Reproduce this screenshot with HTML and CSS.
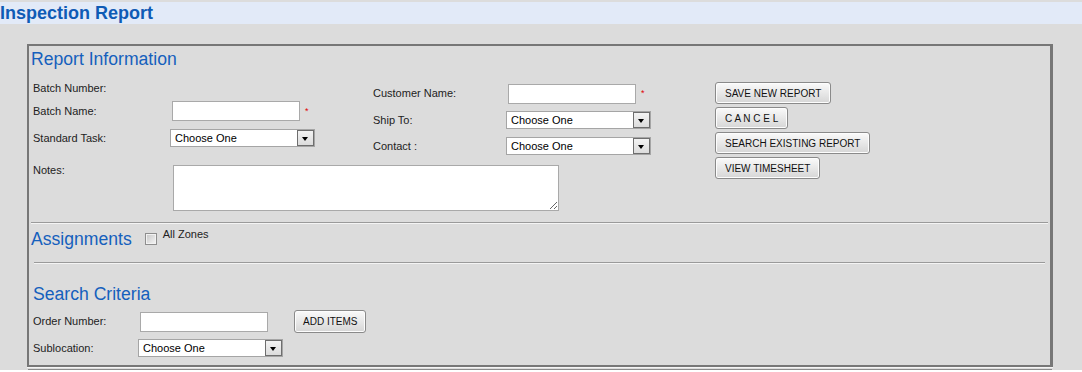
FILE: index.html
```html
<!DOCTYPE html>
<html lang="en">
<head>
  <meta charset="UTF-8" />
  <title>Inspection Report</title>
  <link rel="stylesheet" href="styles.css">
</head>
<body>
  <div class="page-head">Inspection Report</div>

  <div class="panel">
    <h2 class="section-title">Report Information</h2>

    <div class="report-info">
      <div class="info-fields">
        <div class="info-cols">
          <div class="col col-left">
            <div class="field f-number"><label>Batch Number:</label></div>
            <div class="field"><label>Batch Name:</label><input type="text" class="text"><span class="req">*</span></div>
            <div class="field f-task">
              <label>Standard Task:</label>
              <span class="dropdown"><select><option>Choose One</option></select><span class="drop-btn"></span></span>
            </div>
          </div>

          <div class="col col-mid">
            <div class="field"><label>Customer Name:</label><input type="text" class="text"><span class="req">*</span></div>
            <div class="field">
              <label>Ship To:</label>
              <span class="dropdown"><select><option>Choose One</option></select><span class="drop-btn"></span></span>
            </div>
            <div class="field">
              <label>Contact :</label>
              <span class="dropdown"><select><option>Choose One</option></select><span class="drop-btn"></span></span>
            </div>
          </div>
        </div>

        <div class="field notes-row">
          <label>Notes:</label>
          <textarea></textarea>
        </div>
      </div>

      <div class="actions">
        <button>SAVE NEW REPORT</button>
        <button>C A N C E L</button>
        <button>SEARCH EXISTING REPORT</button>
        <button>VIEW TIMESHEET</button>
      </div>
    </div>

    <hr class="rule rule-wide">

    <div class="assign-row">
      <h2 class="section-title">Assignments</h2>
      <input type="checkbox" id="allZones" class="check">
      <label for="allZones" class="check-label">All Zones</label>
    </div>

    <hr class="rule rule-narrow">

    <h2 class="section-title search-title">Search Criteria</h2>

    <div class="search">
      <div class="field f-order">
        <label>Order Number:</label>
        <input type="text" class="text">
        <button class="add-btn">ADD ITEMS</button>
      </div>
      <div class="field f-subloc">
        <label>Sublocation:</label>
        <span class="dropdown"><select><option>Choose One</option></select><span class="drop-btn"></span></span>
      </div>
    </div>
  </div>

  <div class="panel-next"></div>
</body>
</html>
```

FILE: styles.css
```css
html {
  background: #fff;
}

body {
  margin: 0;
  padding-top: 2px;
  background: #dcdcdc;
  font-family: "Liberation Sans", Arial, Helvetica, sans-serif;
  font-size: 11px;
  color: #222;
}

.page-head {
  height: 22px;
  line-height: 22px;
  background: #e2eaf8;
  color: #0f5bb5;
  font-size: 18px;
  font-weight: bold;
}

.panel {
  margin: 20px 29px 0 27px;
  border: 2px solid #777;
  border-right-width: 3px;
  padding-bottom: 7px;
  box-shadow: 0 1px 0 #f4f4f4;
}

.panel-next {
  margin: 2px 30px 0 28px;
  border-top: 1px solid #8a8a8a;
}

.section-title {
  margin: 0;
  padding: 2px 0 0 2px;
  font-size: 17.6px;
  font-weight: normal;
  line-height: 22px;
  color: #1560bd;
}

/* report information block */
.report-info {
  display: flex;
  margin-top: 6px;
  padding-left: 4px;
}

.info-cols {
  display: flex;
}

.col {
  display: flex;
  flex-direction: column;
}

.col-left {
  width: 340px;
}

.col-left label {
  width: 137px;
}

.col-mid {
  width: 342px;
  padding-top: 6px;
  gap: 4px;
}

.col-mid label {
  width: 133px;
}

.col-mid .field:first-child {
  height: 23px;
}

.field {
  display: flex;
  align-items: center;
  height: 22px;
}

.field label {
  flex: none;
  line-height: 13px;
}

.f-number {
  height: 24px;
}

.f-task {
  margin-top: 5px;
}

.notes-row {
  height: auto;
  align-items: flex-start;
  margin-top: 8px;
}

.notes-row label {
  width: 137px;
  margin-top: -1px;
}

input.text {
  box-sizing: border-box;
  width: 128px;
  height: 20px;
  margin: 0 0 0 2px;
  padding: 0 3px;
  border: 1px solid #a9a9a9;
  background: #fff;
  font: inherit;
}

textarea {
  box-sizing: border-box;
  width: 386px;
  height: 46px;
  margin: 0 0 0 3px;
  border: 1px solid #a9a9a9;
  background: #fff;
  font: inherit;
}

.req {
  margin-left: 5px;
  font-size: 9px;
  line-height: 9px;
  color: #e00000;
}

.dropdown {
  position: relative;
  display: inline-block;
  width: 145px;
  height: 18px;
}

.dropdown select {
  appearance: none;
  box-sizing: border-box;
  width: 100%;
  height: 18px;
  margin: 0;
  padding: 0 20px 0 4px;
  border: 1px solid #a5a5a5;
  border-radius: 0;
  background: #fff;
  font: inherit;
  color: #000;
}

.drop-btn {
  position: absolute;
  top: 1px;
  right: 1px;
  width: 15px;
  height: 14px;
  border: 1px solid #6e6e6e;
  background: linear-gradient(#f3f3f3, #dcdcdc);
  pointer-events: none;
}

.drop-btn::after {
  content: "";
  position: absolute;
  left: 4px;
  top: 6px;
  border-top: 4px solid #000;
  border-left: 3.5px solid transparent;
  border-right: 3.5px solid transparent;
}

/* right-hand buttons */
.actions {
  display: flex;
  flex-direction: column;
  align-items: flex-start;
  gap: 3px;
  padding-top: 6px;
}

button {
  height: 22px;
  padding: 0 9px;
  border: 1px solid #8a8a8a;
  border-radius: 3px;
  background: linear-gradient(#fafafa, #e6e6e6 55%, #d6d6d6);
  box-shadow: inset 0 0 0 1px #fdfdfd;
  font-family: inherit;
  font-size: 10px;
  color: #111;
  cursor: pointer;
}

.rule {
  height: 0;
  border: 0;
  border-top: 1px solid #9a9a9a;
  border-bottom: 1px solid #f4f4f4;
}

.rule-wide {
  margin: 11px 2px 0;
}

.rule-narrow {
  margin: 12px 5px 0;
}

/* assignments */
.assign-row {
  display: flex;
  align-items: flex-start;
  margin-top: 2px;
}

.check {
  appearance: none;
  box-sizing: border-box;
  width: 12px;
  height: 12px;
  margin: 7px 0 0 13px;
  border: 1px solid #8e8e8e;
  background: linear-gradient(135deg, #c6c6c6, #f6f6f6);
  box-shadow: inset 0 0 0 1px #f2f2f2;
}

.check-label {
  margin: 2px 0 0 6px;
  line-height: 13px;
}

/* search criteria */
.search-title {
  margin-top: 17px;
  padding-left: 4px;
}

.search {
  padding-left: 4px;
}

.search label {
  width: 105px;
}

.f-order {
  height: 23px;
  margin-top: 5px;
}

.add-btn {
  height: 23px;
  margin-left: 26px;
  padding: 0 8px;
}

.f-subloc {
  height: 20px;
  margin-top: 5px;
}
```
